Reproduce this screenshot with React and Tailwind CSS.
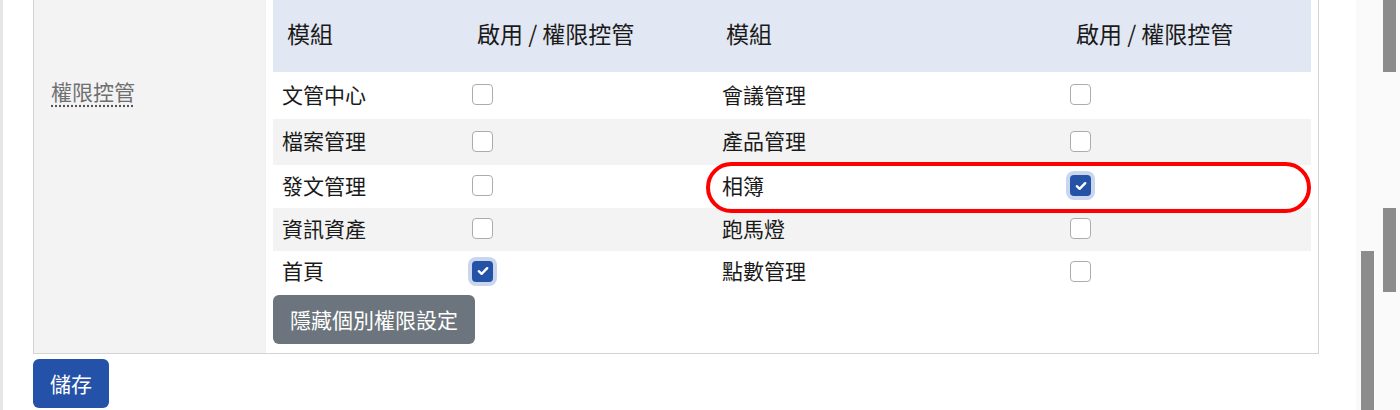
import React from "react";

const font = { fontFamily: '"Noto Sans CJK TC", "Noto Sans", sans-serif' };

function Check({ on }) {
  if (on) {
    return (
      <span className="flex h-[21px] w-[21px] items-center justify-center rounded-[4px] bg-[#2452a6] ring-4 ring-[#c9d6ee]">
        <svg width="12" height="10" viewBox="0 0 12 10">
          <path d="M1.8 5.2 L4.6 7.8 L10.2 2.2" fill="none" stroke="#fff" strokeWidth="2.4" strokeLinecap="round" strokeLinejoin="round" />
        </svg>
      </span>
    );
  }
  return <span className="block h-[21px] w-[21px] rounded-[4px] border border-[#acacac] bg-white" />;
}

const rows = [
  { a: "文管中心", ac: false, b: "會議管理", bc: false, h: "h-[47px]", bg: "bg-white" },
  { a: "檔案管理", ac: false, b: "產品管理", bc: false, h: "h-[46px]", bg: "bg-[#f3f3f3]" },
  { a: "發文管理", ac: false, b: "相簿", bc: true, h: "h-[43px]", bg: "bg-white", mark: true },
  { a: "資訊資產", ac: false, b: "跑馬燈", bc: false, h: "h-[43px]", bg: "bg-[#f3f3f3]" },
  { a: "首頁", ac: true, b: "點數管理", bc: false, h: "h-[42px]", bg: "bg-white" },
];

export default function App() {
  return (
    <div className="flex h-[410px] w-[1400px] overflow-hidden bg-white text-[#1a1a1a]" style={font}>
      <div className="flex w-[1356px] flex-col border-l-[3px] border-[#e6e6e6] pl-[30px]">
        <div className="flex h-[354px] w-[1286px] border-x border-b border-[#d4d4d4]">
          <div className="w-[232px] shrink-0 bg-[#f3f3f3] pl-[17px] pt-[76px]">
            <span className="text-[21px] leading-[30px] text-[#6f6f6f] underline decoration-dotted decoration-[#555] underline-offset-[5px]">
              權限控管
            </span>
          </div>
          <div className="flex flex-1 flex-col px-[7px]">
            <div className="grid h-[72px] grid-cols-[190px_250px_348px_250px] items-center bg-[#e2e8f3] pb-[6px] text-[23px]">
              <div className="pl-[14px]">模組</div>
              <div className="pl-[14px]">啟用 / 權限控管</div>
              <div className="pl-[13px]">模組</div>
              <div className="pl-[15px]">啟用 / 權限控管</div>
            </div>
            {rows.map((r, i) => (
              <div key={i} className={`relative grid grid-cols-[190px_250px_348px_250px] items-center pb-[2px] text-[21px] ${r.h} ${r.bg}`}>
                <div className="pl-[9px]">{r.a}</div>
                <div className="pl-[9px]"><Check on={r.ac} /></div>
                <div className="pl-[9px]">{r.b}</div>
                <div className="pl-[9px]"><Check on={r.bc} /></div>
                {r.mark && (
                  <div className="pointer-events-none absolute bottom-[-5px] left-[433px] right-0 top-[-3px] z-10 rounded-full border-[4.5px] border-[#ff0000]" />
                )}
              </div>
            ))}
            <div className="mt-[2px]">
              <button className="h-[49px] w-[202px] rounded-[6px] bg-[#6c757d] text-[21px] text-white">
                隱藏個別權限設定
              </button>
            </div>
          </div>
        </div>
        <div className="mt-[5px]">
          <button className="h-[49px] w-[76px] rounded-[6px] bg-[#2452a8] text-[21px] text-white">儲存</button>
        </div>
      </div>
      <div className="flex h-full w-[44px] gap-[9px] bg-[#fafafa] pl-[5px]">
        <div className="w-[13px]">
          <div className="mt-[251px] h-[159px] bg-[#8c8c8c]" />
        </div>
        <div className="w-[13px]">
          <div className="h-[72px] bg-[#8c8c8c]" />
          <div className="mt-[136px] h-[84px] bg-[#8c8c8c]" />
        </div>
      </div>
    </div>
  );
}
